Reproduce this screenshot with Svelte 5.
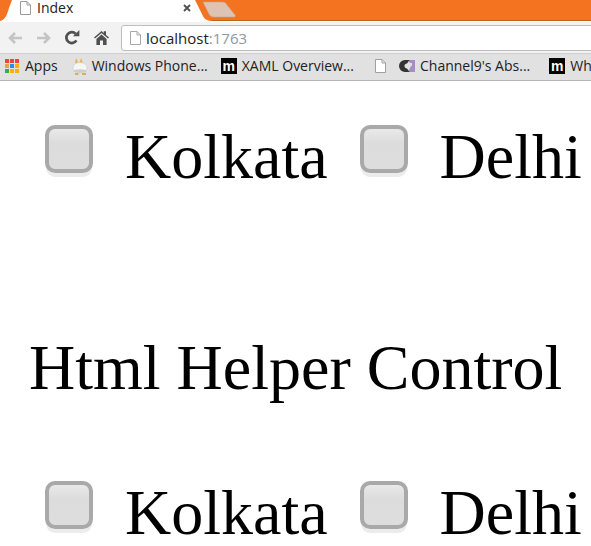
<script>
  const rows = [0, 1];
  const bookmarks = [
    { id: 'apps', label: 'Apps', gap: 14 },
    { id: 'phone', label: 'Windows Phone...', gap: 13 },
    { id: 'm', label: 'XAML Overview...', gap: 21 },
    { id: 'doc', label: '', gap: 13 },
    { id: 'ch9', label: "Channel9's Abs...", gap: 19 },
    { id: 'm', label: 'What', gap: 0 }
  ];
  const appColors = ['#e8453c','#e8453c','#e8453c','#e8a33c','#2f8be8','#f4b400','#3aa757','#f4b400','#f4b400'];
</script>

<div class="chrome">
  <div class="tabstrip">
    <svg class="tabshape" width="591" height="22" viewBox="0 0 591 22">
      <path d="M0 21V0H591V21Z" fill="#f47321"/>
      <path d="M0 21H0C5 20 7 15 9 8L12 0H195L202 14C204 19 207 21 212 21Z" fill="#fff"/>
      <path d="M212 20.500H591" stroke="#b9651f" stroke-width="1"/>
      <path d="M203 2H222C225 2 226 3 227 5L235 15C236 16 235 17 234 17H214C211 17 210 16 209 14Z" fill="#dcc3b4" stroke="#c9a48c" stroke-width="0.6"/>
    </svg>
    <div class="tab">
      <svg class="doc" width="11" height="14" viewBox="0 0 11 14"><path d="M.5.5H7L10.5 4V13.5H.5Z" fill="#fff" stroke="#9a9a9a"/><path d="M7 .5V4H10.5" fill="none" stroke="#9a9a9a"/></svg>
      <span class="tabtitle">Index</span>
      <span class="close">
        <svg width="8" height="8" viewBox="0 0 8 8"><path d="M1 1L7 7M7 1L1 7" stroke="#505050" stroke-width="1.9"/></svg>
      </span>
    </div>
  </div>

  <div class="toolbar">
    <svg class="nav first" width="16" height="14" viewBox="0 0 16 14"><path d="M15 7H3M8 2L3 7L8 12" fill="none" stroke="#c4c4c4" stroke-width="2.6"/></svg>
    <svg class="nav" width="16" height="14" viewBox="0 0 16 14"><path d="M1 7H13M8 2L13 7L8 12" fill="none" stroke="#c4c4c4" stroke-width="2.6"/></svg>
    <svg class="nav reload" width="16" height="15" viewBox="0 0 16 15"><path d="M12.4 10.4A5.4 5.4 0 1 1 11.6 3.8" fill="none" stroke="#505050" stroke-width="2.7"/><path d="M9 6.3H15.4V0Z" fill="#505050"/></svg>
    <svg class="nav home" width="15" height="15" viewBox="0 0 15 15"><path d="M0 7.5L7.5 1L9.8 3V1.3H12V4.9L15 7.5L14 8.5L7.5 3L1 8.5Z M2.4 9L7.5 4.6L12.6 9V15H9V10.5H6V15H2.4Z" fill="#505050"/></svg>
    <div class="omnibox">
      <svg width="11" height="14" viewBox="0 0 11 14"><path d="M.5.5H7L10.5 4V13.5H.5Z" fill="#fff" stroke="#a8a8a8"/><path d="M7 .5V4H10.5" fill="none" stroke="#a8a8a8"/></svg>
      <span class="url">localhost<span class="port">:1763</span></span>
    </div>
  </div>

  <div class="bookmarks">
    {#each bookmarks as b}
      <div class="bm" style="margin-right: {b.gap}px">
        {#if b.id === 'apps'}
          <span class="apps">
            {#each appColors as c}<i style="background: {c}"></i>{/each}
          </span>
        {:else if b.id === 'phone'}
          <svg class="rabbit" width="16" height="18" viewBox="0 0 16 18"><path d="M4 1L6.500 6H3ZM9 1L11 6H7.500Z" fill="#eeb14c"/><ellipse cx="8" cy="10.500" rx="7" ry="5" fill="#f6f6f4" stroke="#d0d0c8" stroke-width=".7"/><ellipse cx="8" cy="14" rx="6.500" ry="1.800" fill="#cfcfc8"/><path d="M3 17H6.500M10 17H14" stroke="#d99a3c" stroke-width="1.400"/></svg>
        {:else if b.id === 'm'}
          <span class="mlogo">m</span>
        {:else if b.id === 'doc'}
          <svg width="11" height="14" viewBox="0 0 11 14"><path d="M.5.5H7L10.5 4V13.5H.5Z" fill="#fff" stroke="#a0a0a0"/><path d="M7 .5V4H10.5" fill="none" stroke="#a0a0a0"/></svg>
        {:else if b.id === 'ch9'}
          <svg width="16" height="12" viewBox="0 0 16 12"><path d="M9 0H16V12H9L12 6H13V3H11Z" fill="#a98cc4"/><path d="M6 0H10.500L8 3.500C6.500 3.500 5.500 4.500 5.500 6S6.500 8.500 8 8.500L10.500 12H6A6 6 0 0 1 6 0Z" fill="#333"/></svg>
        {/if}
        {#if b.label}<span class="bmlabel">{b.label}</span>{/if}
      </div>
    {/each}
  </div>
</div>

<main class="page">
  {#each rows as r}
    <div class="row" class:last={r === 1}>
      <span class="box"></span>
      <span class="city">Kolkata</span>
      <span class="box second"></span>
      <span class="city">Delhi</span>
    </div>
    {#if r === 0}
      <h1>Html Helper Control</h1>
    {/if}
  {/each}
</main>

<style>
  :global(html), :global(body) {
    margin: 0;
    height: 546px;
    overflow: hidden;
    background: #fff;
  }
  .chrome {
    width: 591px;
    font-family: "Open Sans", "Noto Sans", sans-serif;
    overflow: hidden;
  }
  .tabstrip {
    position: relative;
    height: 21px;
    background: #f47321;
  }
  .tabshape {
    position: absolute;
    left: 0;
    top: 0;
  }
  .tab {
    position: relative;
    display: flex;
    align-items: center;
    height: 16px;
    padding-left: 20px;
    width: 170px;
  }
  .doc { flex: none; }
  .tabtitle {
    margin-left: 6px;
    font-size: 14px;
    line-height: 20px;
    color: #222;
  }
  .close {
    display: flex;
    margin-left: auto;
    margin-right: -1px;
  }
  .toolbar {
    display: flex;
    align-items: center;
    height: 32px;
    padding: 0 0 0 7px;
    background: #f2f2f2;
    border-top: 1px solid #fff;
    box-sizing: border-box;
  }
  .nav { flex: none; margin-right: 13px; }
  .reload { margin-left: -1px; margin-right: 14px; }
  .home { margin-right: 12px; }
  .omnibox {
    flex: 1;
    display: flex;
    align-items: center;
    height: 26px;
    margin-top: 1px;
    margin-right: -4px;
    padding-left: 8px;
    background: #fff;
    border: 1px solid #bdbdbd;
    border-radius: 3px;
    box-sizing: border-box;
  }
  .url {
    margin-left: 5px;
    font-size: 15px;
    color: #222;
  }
  .port { color: #8a98a8; }
  .bookmarks {
    display: flex;
    align-items: center;
    height: 28px;
    padding: 0 0 2px 5px;
    white-space: nowrap;
    background: #e1e1e1;
    border-top: 1px solid #cfcfcf;
    border-bottom: 1px solid #b4b4b4;
    box-sizing: border-box;
  }
  .bm {
    display: flex;
    align-items: center;
    gap: 5px;
    flex: none;
  }
  .bmlabel {
    font-size: 14px;
    line-height: 18px;
    color: #222;
  }
  .rabbit { margin-right: -1px; }
  .apps {
    display: grid;
    grid-template-columns: repeat(3, 4px);
    grid-auto-rows: 4px;
    gap: 1px;
    margin-right: 1px;
  }
  .apps i { display: block; }
  .mlogo {
    display: flex;
    align-items: center;
    justify-content: center;
    width: 16px;
    height: 16px;
    background: #000;
    color: #fff;
    font: 700 14px/1 "Liberation Sans", sans-serif;
  }
  .page {
    font-family: "Liberation Serif", "Times New Roman", serif;
    color: #000;
    height: 465px;
    overflow: hidden;
  }
  .row {
    display: flex;
    align-items: center;
    height: 74px;
    padding: 39px 0 0 45px;
    font-size: 64px;
    line-height: 74px;
    white-space: nowrap;
  }
  .row.last { padding-top: 0; }
  .box {
    flex: none;
    box-sizing: border-box;
    width: 48px;
    height: 48px;
    margin-right: 32px;
    margin-top: -16px;
    border: 4px solid #a9a9a9;
    border-radius: 10px;
    background: linear-gradient(#e9e9e9, #dcdcdc 35%, #dddddd);
    box-shadow: 0 5px 0 -1px #ececec;
  }
  .box.second { margin-left: 32px; }
  h1 {
    margin: 137px 0 71px 29px;
    font-size: 64px;
    line-height: 74px;
    font-weight: 400;
    white-space: nowrap;
  }
</style>
